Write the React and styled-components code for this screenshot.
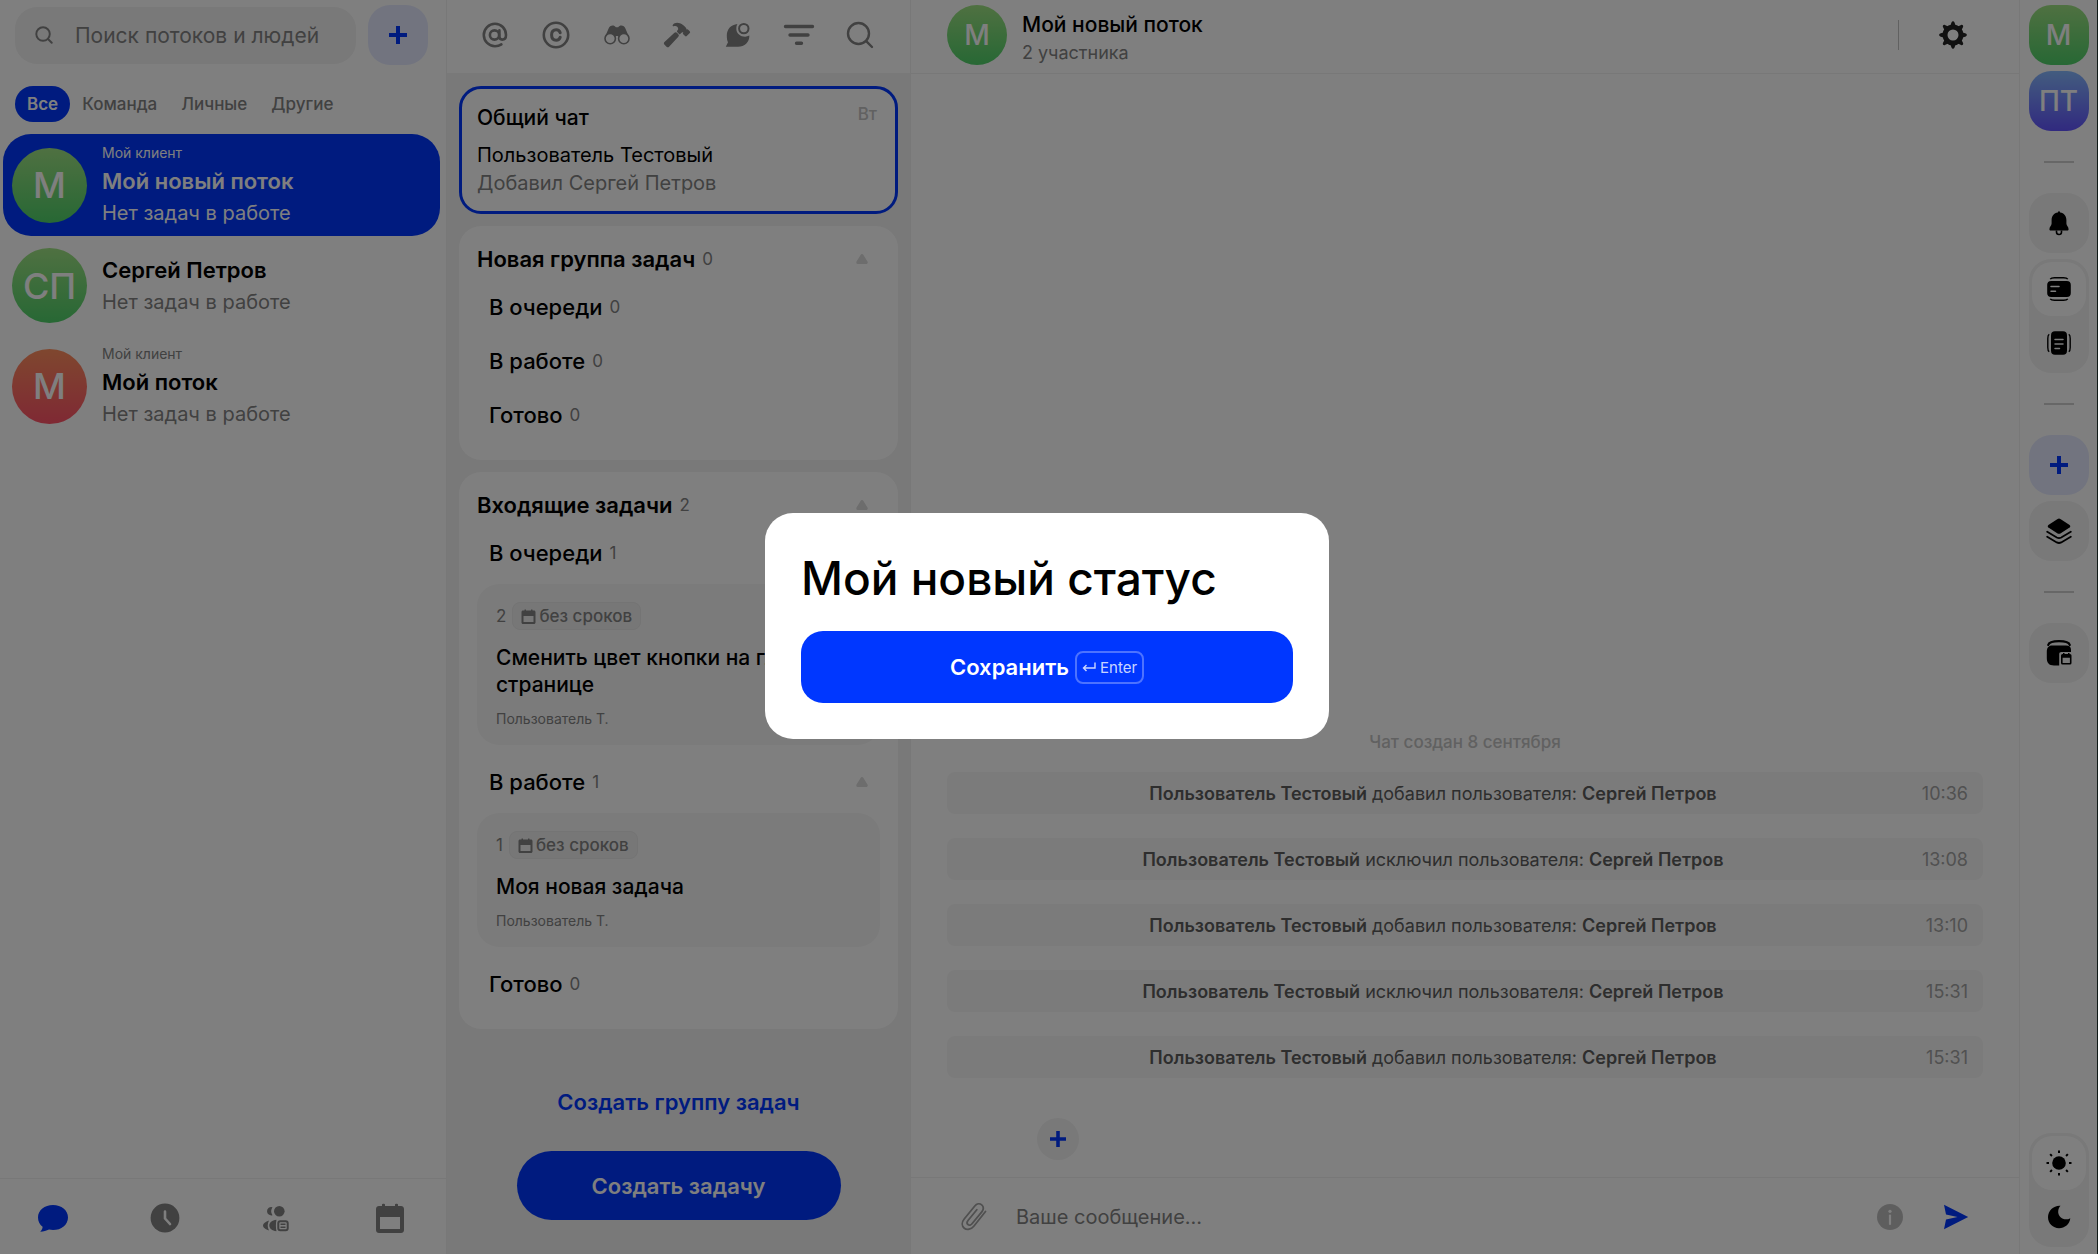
import styled, { createGlobalStyle, css } from 'styled-components';
import { IoHammer } from 'react-icons/io5';

const palette = {
    blue: '#0037ff',
    lightBlue: '#e4e9ff',
    black: '#000000',
    dark: '#5c5c5c',
    gray: '#828282',
    light: '#c2c2c2',
    line: '#f0f0f0',
    panel: '#f2f2f2',
    card: '#f7f7f7',
};

const gradients = {
    green: 'linear-gradient(#9fe283, #4fd069)',
    red: 'linear-gradient(#ff8f5e, #ff5268)',
    blue: 'linear-gradient(#86b9ff, #6254ff)',
};

const GlobalStyle = createGlobalStyle`
    * {
        box-sizing: border-box;
    }
    body {
        margin: 0;
        background: white;
        color: ${palette.black};
        font-family: Inter, 'Liberation Sans', sans-serif;
    }
    button, input {
        font-family: inherit;
    }
    button {
        padding: 0;
        border: none;
        background: none;
        cursor: pointer;
    }
    svg {
        display: block;
        flex-shrink: 0;
    }
    h1, h2, h3, p, ul {
        margin: 0;
        padding: 0;
    }
`;

/* icons */

const Svg = ({ size = 28, box = 28, children, ...rest }) => (
    <svg width={size} height={size} viewBox={`0 0 ${box} ${box}`} fill="none" aria-hidden="true" {...rest}>
        {children}
    </svg>
);

const SearchIcon = ({ size, width = 2 }) => (
    <Svg size={size}>
        <g stroke="currentColor" strokeWidth={width} strokeLinecap="round">
            <circle cx="12.5" cy="12.5" r="10.5" />
            <path d="M20.2 20.2L26 26" />
        </g>
    </Svg>
);

const PlusIcon = ({ size = 18 }) => (
    <Svg size={size} box={18}>
        <path d="M9 1.5V16.5M1.5 9H16.5" stroke="currentColor" strokeWidth="4" strokeLinecap="square" />
    </Svg>
);

const MentionIcon = () => (
    <Svg>
        <g stroke="currentColor" strokeWidth="2.6" strokeLinecap="round">
            <circle cx="13.5" cy="14" r="4.6" />
            <path d="M18.4 9.4V15.6C18.4 17.6 19.6 18.6 21.2 18.6C23.6 18.6 25 16.8 25 14C25 7.6 20.2 2.8 14 2.8S2.8 7.8 2.8 14S7.8 25.2 14 25.2C16.6 25.2 18.6 24.6 20.4 23.4" />
        </g>
    </Svg>
);

const CopyrightIcon = () => (
    <Svg>
        <circle cx="14" cy="14" r="12.2" stroke="currentColor" strokeWidth="2.6" />
        <path d="M18.2 16.2C17.6 18.2 16.2 19.2 14.2 19.2C11.4 19.2 9.6 17.2 9.6 14S11.4 8.8 14.2 8.8C16.2 8.8 17.6 9.8 18.2 11.8" stroke="currentColor" strokeWidth="3" strokeLinecap="round" />
    </Svg>
);

const BinocularsIcon = () => (
    <Svg>
        <path d="M2 16L5.6 7.4C6.6 4.4 11 3.4 12.8 6.2H15.2C17 3.4 21.4 4.4 22.4 7.4L26 16L18 18.5L15 15H13L10 18.5Z" fill="currentColor" />
        <circle cx="7.2" cy="17.6" r="5.2" fill="white" stroke="currentColor" strokeWidth="1.6" />
        <circle cx="20.8" cy="17.6" r="5.2" fill="white" stroke="currentColor" strokeWidth="1.6" />
    </Svg>
);

const MoodIcon = () => (
    <Svg>
        <path d="M13.5 3C7 3.6 2.8 8.2 2.8 14.5C2.8 17.4 3.2 19.8 4 21.2L1.8 25.8H14C20.6 25.8 25.4 21.6 25.4 14.6C19.5 17.6 12.5 13.6 12.4 8.4C12.3 6 12.6 4.4 13.5 3Z" fill="currentColor" />
        <circle cx="19.8" cy="7.6" r="4.7" stroke="currentColor" strokeWidth="2" />
    </Svg>
);

const FilterIcon = () => (
    <Svg size={32} box={32}>
        <path d="M2.5 7.5H29.5M7 16H25M13.5 24.2H18.5" stroke="currentColor" strokeWidth="3.4" strokeLinecap="round" />
    </Svg>
);

const ArrowIcon = () => (
    <Svg size={12} box={12}>
        <path d="M6 2.6L10.2 9.4H1.8Z" fill="currentColor" stroke="currentColor" strokeWidth="3" strokeLinejoin="round" />
    </Svg>
);

const CalendarIcon = ({ size = 30 }) => (
    <Svg size={size} box={30}>
        <path d="M4 3H7V1.5C7 0.5 10 0.5 10 1.5V3H20V1.5C20 0.5 23 0.5 23 1.5V3H26C27.7 3 29 4.3 29 6V27C29 28.7 27.7 30 26 30H4C2.3 30 1 28.7 1 27V6C1 4.3 2.3 3 4 3ZM5 14V26H25V14Z" fill="currentColor" fillRule="evenodd" />
    </Svg>
);

const ChatIcon = () => (
    <Svg size={32} box={32}>
        <path d="M16 3C24.4 3 31 8.2 31 15.4S24.4 28 16 28C14.6 28 13.2 27.8 12 27.5C9.500 28.7 6.500 29.8 3.2 29.8C4.8 28.3 5.6 26.6 5.6 24.8C2.7 22.5 1 19.2 1 15.4C1 8.2 7.6 3 16 3Z" fill="currentColor" />
    </Svg>
);

const ClockIcon = () => (
    <Svg size={30} box={30}>
        <circle cx="15" cy="15" r="14.4" fill="currentColor" />
        <path d="M15 8.5V15.5L20 21" stroke="white" strokeWidth="2.6" strokeLinecap="round" strokeLinejoin="round" />
    </Svg>
);

const PeopleIcon = () => (
    <Svg size={30} box={30}>
        <path d="M9.5 4.2A4.2 4.2 0 1 0 9.5 12.2A7 7 0 0 1 9.5 4.2Z" fill="currentColor" />
        <circle cx="16.3" cy="8.2" r="5.3" fill="currentColor" />
        <path d="M6 17.5C2.5 18.6 0 20.6 0 22.5S2.5 26.5 6 27.5C4.3 24.5 4.3 20.5 6 17.5ZM13.5 16.8C9 17.4 6.3 19.8 6.3 22.5S9 27.8 13.5 28.3C12.7 25 12.7 20 13.5 16.8Z" fill="currentColor" />
        <rect x="15.3" y="18.2" width="9.4" height="9" rx="2" stroke="currentColor" strokeWidth="2" />
        <path d="M17.5 21.3H22.5M17.5 24.2H22.5" stroke="currentColor" strokeWidth="1.6" />
    </Svg>
);

const GearIcon = () => (
    <Svg size={30} box={30}>
        <circle cx="15" cy="15" r="8" stroke="currentColor" strokeWidth="5" />
        {[0, 45, 90, 135, 180, 225, 270, 315].map((angle) => (
            <path key={angle} d="M12.2 6L13.6 2.2C14 0.8 16 0.8 16.4 2.2L17.8 6Z" fill="currentColor" transform={`rotate(${angle} 15 15)`} />
        ))}
    </Svg>
);

const BellIcon = () => (
    <Svg size={26} box={26}>
        <path d="M13 0.8L14.2 2.6C18 3.2 20.4 6 20.4 10V13.5C20.4 15.5 22.6 16.8 22.6 19.2C22.6 20.4 21.6 20.6 20.6 20.6H5.4C4.4 20.6 3.4 20.4 3.4 19.2C3.4 16.8 5.6 15.5 5.6 13.5V10C5.6 6 8 3.2 11.8 2.6Z" fill="currentColor" />
        <path d="M10.500 20.5V22A2.5 2.5 0 0 0 15.5 22V20.5" stroke="currentColor" strokeWidth="1.6" />
    </Svg>
);

const CardsIcon = ({ vertical }) => (
    <Svg size={26} box={26}>
        {vertical ? (
            <>
                <rect x="5" y="1.2" width="16" height="23.6" rx="4" fill="currentColor" />
                <path d="M3.2 4.200Q1.800 5.200 1.800 8.500V17.500Q1.800 20.800 3.200 21.800M22.800 4.200Q24.200 5.200 24.200 8.500V17.500Q24.200 20.800 22.800 21.800" stroke="currentColor" strokeWidth="1.4" />
                <path d="M9 9.5H17M9 14H17M9 18.5H13.5" stroke={palette.panel} strokeWidth="1.5" strokeLinecap="round" />
            </>
        ) : (
            <>
                <rect x="1.2" y="5" width="23.6" height="16" rx="4" fill="currentColor" />
                <path d="M4.200 3.200Q5.200 1.800 8.500 1.800H17.500Q20.800 1.800 21.800 3.200M4.200 22.800Q5.200 24.200 8.500 24.200H17.500Q20.800 24.200 21.800 22.800" stroke="currentColor" strokeWidth="1.4" />
                <path d="M5 10.5H13M5 15.2H9.5" stroke="white" strokeWidth="1.5" strokeLinecap="round" />
            </>
        )}
    </Svg>
);

const LayersIcon = () => (
    <Svg size={26} box={26}>
        <path d="M11.6 0.9Q13 0.2 14.4 0.9L23.6 7Q25.2 8.2 23.6 9.4L14.8 15.3Q13 16.4 11.2 15.3L2.4 9.4Q0.8 8.2 2.4 7Z" fill="currentColor" />
        <path d="M1.2 13.7L10.8 19.5Q13 20.7 15.2 19.5L24.8 13.7M1.2 18.7L10.8 24.4Q13 25.6 15.2 24.4L24.8 18.7" stroke="currentColor" strokeWidth="1.8" strokeLinecap="round" />
    </Svg>
);

const PlanIcon = () => (
    <Svg size={26} box={26}>
        <path d="M2.2 5C3 2 6 1.2 13 1.2S23 2 23.8 5" stroke="currentColor" strokeWidth="2.2" strokeLinecap="round" />
        <path d="M6 5.6H20C23.5 5.6 25 7 25 10V12H15.5C14 12 13.2 12.8 13.2 14.3V25.4H8C3 25.4 0.8 23 0.8 18V12C0.8 8 2.5 5.6 6 5.6Z" fill="currentColor" />
        <path d="M15 15.5Q15 14 16.5 14H17V13H18.5V14H22V13H23.5V14H24Q25.5 14 25.5 15.5V23Q25.5 24.5 24 24.5H16.5Q15 24.5 15 23ZM16.6 17.8V23H23.9V17.8Z" fill="currentColor" fillRule="evenodd" />
    </Svg>
);

const SunIcon = () => (
    <Svg size={26} box={26}>
        <circle cx="13" cy="13" r="6.8" fill="currentColor" />
        {[0, 45, 90, 135, 180, 225, 270, 315].map((angle) => (
            <path key={angle} d="M13 0.5V3" stroke="currentColor" strokeWidth="2" transform={`rotate(${angle} 13 13)`} />
        ))}
    </Svg>
);

const MoonIcon = () => (
    <Svg size={24} box={24}>
        <path d="M13.5 0.8C7 0.2 1 5.4 1 12.3C1 18.6 6 23.2 12 23.2C17.8 23.2 22.8 19 23.3 13.2C17.5 16.6 10.6 12 11.2 6C11.4 3.8 12.3 2.2 13.5 0.8Z" fill="currentColor" />
    </Svg>
);

const ClipIcon = () => (
    <Svg size={32} box={32}>
        <path d="M27.5 10.5L15.8 25.2C13.2 28.4 9 29.4 6.3 27.2C3.6 25 3.6 21.2 6.2 18L16.8 5C18.6 2.8 21.6 2.2 23.7 3.9C25.8 5.6 25.8 8.4 24 10.6L14 22.8C12.9 24.2 11.2 24.6 10 23.6C8.8 22.6 8.9 20.9 10 19.5L18.8 8.7" stroke="currentColor" strokeWidth="1.8" strokeLinecap="round" />
    </Svg>
);

const InfoIcon = () => (
    <Svg size={26} box={26}>
        <circle cx="13" cy="13" r="13" fill="currentColor" />
        <circle cx="13" cy="7.3" r="1.6" fill="white" />
        <path d="M13 11.5V20" stroke="white" strokeWidth="2.2" strokeLinecap="round" />
    </Svg>
);

const SendIcon = () => (
    <Svg size={26} box={26}>
        <path d="M1 0.8L25.2 13L1 25.2L3 15.4L14.5 13L3 10.6Z" fill="currentColor" />
    </Svg>
);

const EnterIcon = () => (
    <Svg size={14} box={14}>
        <path d="M13 2.5V8H1.5M4.5 5L1.5 8L4.5 11" stroke="currentColor" strokeWidth="1.4" />
    </Svg>
);

/* shared */

const Avatar = styled.span`
    display: flex;
    align-items: center;
    justify-content: center;
    flex-shrink: 0;
    width: ${({ $large }) => ($large ? '75px' : '60px')};
    height: ${({ $large }) => ($large ? '75px' : '60px')};
    border-radius: ${({ $square }) => ($square ? '22px' : '50%')};
    background: ${({ $color }) => gradients[$color]};
    color: white;
    font-size: ${({ $large }) => ($large ? '36px' : '28px')};
    font-weight: 500;
`;

const SquareButton = styled.button`
    display: flex;
    align-items: center;
    justify-content: center;
    flex-shrink: 0;
    width: 60px;
    height: 60px;
    border-radius: 22px;
    background: ${({ $primary }) => ($primary ? palette.lightBlue : palette.panel)};
    color: ${({ $primary }) => ($primary ? palette.blue : palette.black)};
`;

const IconButton = styled.button`
    display: flex;
    align-items: center;
    justify-content: center;
    width: 32px;
    height: 32px;
    color: ${({ $color }) => $color || palette.gray};
`;

const Page = styled.div`
    display: flex;
    height: 100vh;
    min-height: 760px;
    border-right: 1px solid #20342e;
`;

/* streams */

const Sidebar = styled.aside`
    display: flex;
    flex-direction: column;
    flex-shrink: 0;
    width: 446px;
`;

const SearchRow = styled.div`
    display: flex;
    align-items: center;
    gap: 12px;
    padding: 5px 18px 0 15px;
`;

const SearchBox = styled.label`
    display: flex;
    align-items: center;
    flex: 1;
    gap: 22px;
    min-width: 0;
    height: 57px;
    padding: 0 20px;
    border-radius: 22px;
    background: ${palette.panel};
    color: ${palette.gray};

    input {
        flex: 1;
        min-width: 0;
        padding: 0;
        border: none;
        outline: none;
        background: none;
        font-size: 21px;
    }
    input::placeholder {
        color: ${palette.gray};
        opacity: 1;
    }
`;

const Tabs = styled.nav`
    display: flex;
    padding: 21px 15px 12px;
`;

const Tab = styled.button`
    height: 36px;
    padding: 0 12px;
    border-radius: 18px;
    color: ${palette.gray};
    font-size: 17px;
    font-weight: 500;
    ${({ $active }) =>
        $active &&
        css`
            background: ${palette.blue};
            color: white;
            font-weight: 600;
        `}
`;

const StreamList = styled.ul`
    flex: 1;
    padding: 0 6px 0 3px;
    list-style: none;
`;

const Stream = styled.li`
    display: flex;
    align-items: center;
    gap: 15px;
    min-height: 99px;
    padding: 7px 9px;
    border-radius: 28px;
    background: ${({ $active }) => ($active ? palette.blue : 'transparent')};
    color: ${({ $active }) => ($active ? 'white' : palette.gray)};

    small {
        display: block;
        font-size: 14px;
        line-height: 24px;
    }
    h3 {
        color: ${({ $active }) => ($active ? 'white' : palette.black)};
        font-size: 22px;
        font-weight: 600;
        line-height: 32px;
    }
    p {
        font-size: 20px;
        line-height: 32px;
    }
`;

const BottomNav = styled.nav`
    display: flex;
    align-items: center;
    justify-content: space-between;
    height: 76px;
    padding: 2px 40px 0 37px;
    border-top: 1px solid ${palette.line};
`;

/* tasks */

const Board = styled.section`
    display: flex;
    flex-direction: column;
    flex-shrink: 0;
    width: 464px;
    border-left: 1px solid ${palette.line};
    background: ${palette.panel};
`;

const BoardTools = styled.header`
    display: flex;
    align-items: center;
    justify-content: space-between;
    height: 73px;
    flex-shrink: 0;
    padding: 0 34px 4px 32px;
    background: white;
`;

const BoardBody = styled.div`
    display: flex;
    flex-direction: column;
    flex: 1;
    gap: 12px;
    padding: 13px 12px 0;
`;

const GeneralChat = styled.article`
    padding: 15px 18px 14px 15px;
    border: 3px solid ${palette.blue};
    border-radius: 22px;
    background: white;

    h2 {
        margin-bottom: 9px;
        font-size: 21px;
        font-weight: 500;
        line-height: 28px;
    }
    p {
        font-size: 20px;
        line-height: 28px;
    }
    p + p {
        color: ${palette.gray};
    }
`;

const GeneralHead = styled.div`
    display: flex;
    justify-content: space-between;

    time {
        color: ${palette.light};
        font-size: 17px;
        font-weight: 500;
        line-height: 20px;
    }
`;

const Group = styled.article`
    padding: 18px;
    border-radius: 22px;
    background: white;
`;

const Count = styled.span`
    color: ${palette.gray};
    font-size: 17px;
    font-weight: 400;
`;

const GroupHead = styled.div`
    display: flex;
    align-items: center;
    gap: 7px;
    height: 30px;
    margin-bottom: 6px;
    padding-right: 12px;

    h2 {
        font-size: 22px;
        font-weight: 600;
    }
    button {
        margin-left: auto;
        color: #dadada;
    }
`;

const Status = styled(GroupHead)`
    height: 54px;
    margin-bottom: 0;
    padding-left: 12px;

    h2 {
        font-weight: 500;
    }
`;

const TaskCard = styled.div`
    margin: 4px 0 10px;
    padding: 18px 19px 16px;
    border-radius: 22px;
    background: ${palette.card};

    h3 {
        margin: 14px 0 11px;
        font-size: 21px;
        font-weight: 500;
        line-height: 27px;
    }
    p {
        color: ${palette.gray};
        font-size: 14px;
        line-height: 20px;
    }
`;

const TaskMeta = styled.div`
    display: flex;
    align-items: center;
    gap: 6px;
    height: 28px;
`;

const Deadline = styled.span`
    display: flex;
    align-items: center;
    gap: 3px;
    height: 28px;
    padding: 0 8px;
    border: 1px solid #e8e8e8;
    border-radius: 8px;
    background: #efefef;
    color: ${palette.gray};
    font-size: 17px;
    font-weight: 500;
`;

const BoardFooter = styled.footer`
    display: flex;
    flex-direction: column;
    align-items: center;
    gap: 33px;
    padding-bottom: 34px;
`;

const LinkButton = styled.button`
    color: ${palette.blue};
    font-size: 22px;
    font-weight: 600;
    line-height: 32px;
`;

const CreateButton = styled.button`
    width: 324px;
    height: 69px;
    border-radius: 35px;
    background: ${palette.blue};
    color: white;
    font-size: 22px;
    font-weight: 600;
`;

/* chat */

const Chat = styled.main`
    display: flex;
    flex-direction: column;
    flex: 1;
    min-width: 0;
    border-left: 1px solid ${palette.line};
`;

const ChatHeader = styled.header`
    display: flex;
    align-items: center;
    gap: 15px;
    height: 74px;
    padding: 0 50px 4px 36px;
    border-bottom: 1px solid ${palette.line};
`;

const ChatInfo = styled.div`
    padding-top: 8px;

    h1 {
        font-size: 21px;
        font-weight: 500;
        line-height: 28px;
    }
    p {
        color: ${palette.gray};
        font-size: 18px;
        line-height: 28px;
    }
`;

const ChatTools = styled.div`
    display: flex;
    align-items: center;
    height: 30px;
    margin-left: auto;
    padding-left: 38px;
    border-left: 1px solid ${palette.light};
`;

const Messages = styled.div`
    display: flex;
    flex-direction: column;
    justify-content: flex-end;
    flex: 1;
    padding: 0 36px 17px;
`;

const ChatDate = styled.p`
    margin-bottom: 18px;
    color: ${palette.light};
    font-size: 17px;
    font-weight: 500;
    line-height: 24px;
    text-align: center;
`;

const Message = styled.div`
    display: flex;
    align-items: center;
    gap: 16px;
    height: 42px;
    margin-bottom: 24px;
    padding: 0 15px;
    border-radius: 8px;
    background: ${palette.card};
    font-size: 18px;

    p {
        flex: 1;
        color: ${palette.dark};
        text-align: center;
    }
    b {
        font-weight: 600;
    }
    time {
        width: 48px;
        color: #a2a2a2;
        text-align: right;
    }
`;

const RoundButton = styled.button`
    display: flex;
    align-items: center;
    justify-content: center;
    width: 42px;
    height: 42px;
    margin: 16px 0 0 90px;
    border-radius: 50%;
    background: ${palette.panel};
    color: ${palette.blue};
`;

const Composer = styled.form`
    display: flex;
    align-items: center;
    height: 77px;
    padding: 2px 47px 0;
    border-top: 1px solid ${palette.line};

    input {
        flex: 1;
        min-width: 0;
        padding: 0 26px;
        border: none;
        outline: none;
        background: none;
        font-size: 20px;
    }
    input::placeholder {
        color: ${palette.gray};
        opacity: 1;
    }
`;

const ComposerActions = styled.div`
    display: flex;
    gap: 34px;
`;

/* right rail */

const Rail = styled.aside`
    display: flex;
    flex-direction: column;
    align-items: center;
    flex-shrink: 0;
    gap: 6px;
    width: 78px;
    padding: 5px 0 7px;
    border-left: 1px solid ${palette.line};
`;

const Divider = styled.hr`
    width: 30px;
    height: 2px;
    margin: 24px 0;
    border: none;
    background: #cfcfcf;
`;

const Switcher = styled.div`
    padding: 3px;
    border-radius: 22px;
    background: ${palette.panel};
    ${({ $bottom }) =>
        $bottom &&
        css`
            margin-top: auto;
        `}
`;

const SwitchButton = styled.button`
    display: flex;
    align-items: center;
    justify-content: center;
    width: 54px;
    height: 54px;
    border-radius: 20px;
    background: ${({ $active }) => ($active ? 'white' : 'transparent')};
    color: ${palette.black};
`;

/* modal */

const Overlay = styled.div`
    position: fixed;
    inset: 0;
    display: flex;
    align-items: center;
    justify-content: center;
    padding: 0 4px 2px 0;
    background: rgba(0, 0, 0, 0.5);
`;

const Modal = styled.form`
    display: flex;
    flex-direction: column;
    gap: 24px;
    width: 564px;
    max-width: 100%;
    padding: 36px;
    border-radius: 28px;
    background: white;
`;

const StatusInput = styled.input`
    width: 100%;
    height: 58px;
    padding: 0;
    border: none;
    outline: none;
    background: none;
    color: ${palette.black};
    font-size: 46px;
    font-weight: 500;
`;

const SaveButton = styled.button`
    display: flex;
    align-items: center;
    justify-content: center;
    gap: 6px;
    height: 72px;
    border-radius: 22px;
    background: ${palette.blue};
    color: white;
    font-size: 22px;
    font-weight: 600;

    kbd {
        display: flex;
        align-items: center;
        gap: 4px;
        height: 33px;
        padding: 0 5px;
        border: 2px solid rgba(255, 255, 255, 0.3);
        border-radius: 8px;
        color: rgba(255, 255, 255, 0.8);
        font-family: inherit;
        font-size: 15px;
        font-weight: 400;
    }
`;

const tabs = ['Все', 'Команда', 'Личные', 'Другие'];

const streams = [
    { letters: 'М', color: 'green', client: 'Мой клиент', name: 'Мой новый поток' },
    { letters: 'СП', color: 'green', name: 'Сергей Петров' },
    { letters: 'М', color: 'red', client: 'Мой клиент', name: 'Мой поток' },
];

const tools = [
    { label: 'Упоминания', icon: <MentionIcon /> },
    { label: 'Авторство', icon: <CopyrightIcon /> },
    { label: 'Наблюдение', icon: <BinocularsIcon /> },
    { label: 'В работе', icon: <IoHammer size={28} /> },
    { label: 'Непрочитанные', icon: <MoodIcon /> },
    { label: 'Фильтр', icon: <FilterIcon /> },
    { label: 'Поиск', icon: <SearchIcon size={28} width={2.4} /> },
];

const groups = [
    {
        title: 'Новая группа задач',
        count: 0,
        statuses: [
            { title: 'В очереди', tasks: [] },
            { title: 'В работе', tasks: [] },
            { title: 'Готово', tasks: [] },
        ],
    },
    {
        title: 'Входящие задачи',
        count: 2,
        statuses: [
            { title: 'В очереди', tasks: [{ id: 2, title: 'Сменить цвет кнопки на главной странице' }] },
            { title: 'В работе', tasks: [{ id: 1, title: 'Моя новая задача' }] },
            { title: 'Готово', tasks: [] },
        ],
    },
];

const messages = [
    { action: 'добавил', time: '10:36' },
    { action: 'исключил', time: '13:08' },
    { action: 'добавил', time: '13:10' },
    { action: 'исключил', time: '15:31' },
    { action: 'добавил', time: '15:31' },
];

const Streams = () => (
    <Sidebar>
        <SearchRow>
            <SearchBox>
                <SearchIcon size={18} width={3} />
                <input type="text" placeholder="Поиск потоков и людей" aria-label="Поиск потоков и людей" />
            </SearchBox>
            <SquareButton $primary aria-label="Создать поток">
                <PlusIcon />
            </SquareButton>
        </SearchRow>
        <Tabs>
            {tabs.map((tab, i) => (
                <Tab key={tab} $active={i === 0}>
                    {tab}
                </Tab>
            ))}
        </Tabs>
        <StreamList>
            {streams.map((stream, i) => (
                <Stream key={stream.name} $active={i === 0}>
                    <Avatar $large $color={stream.color}>
                        {stream.letters}
                    </Avatar>
                    <div>
                        {stream.client ? <small>{stream.client}</small> : null}
                        <h3>{stream.name}</h3>
                        <p>Нет задач в работе</p>
                    </div>
                </Stream>
            ))}
        </StreamList>
        <BottomNav>
            <IconButton $color={palette.blue} aria-label="Чаты">
                <ChatIcon />
            </IconButton>
            <IconButton aria-label="Время">
                <ClockIcon />
            </IconButton>
            <IconButton aria-label="Команда">
                <PeopleIcon />
            </IconButton>
            <IconButton aria-label="Календарь">
                <CalendarIcon />
            </IconButton>
        </BottomNav>
    </Sidebar>
);

const Task = ({ id, title }) => (
    <TaskCard>
        <TaskMeta>
            <Count>{id}</Count>
            <Deadline>
                <CalendarIcon size={15} />
                без сроков
            </Deadline>
        </TaskMeta>
        <h3>{title}</h3>
        <p>Пользователь Т.</p>
    </TaskCard>
);

const Tasks = () => (
    <Board>
        <BoardTools>
            {tools.map((tool) => (
                <IconButton key={tool.label} aria-label={tool.label}>
                    {tool.icon}
                </IconButton>
            ))}
        </BoardTools>
        <BoardBody>
            <GeneralChat>
                <GeneralHead>
                    <h2>Общий чат</h2>
                    <time>Вт</time>
                </GeneralHead>
                <p>Пользователь Тестовый</p>
                <p>Добавил Сергей Петров</p>
            </GeneralChat>
            {groups.map((group) => (
                <Group key={group.title}>
                    <GroupHead>
                        <h2>{group.title}</h2>
                        <Count>{group.count}</Count>
                        <button aria-label="Свернуть">
                            <ArrowIcon />
                        </button>
                    </GroupHead>
                    {group.statuses.map(({ title, tasks }) => (
                        <div key={title}>
                            <Status>
                                <h2>{title}</h2>
                                <Count>{tasks.length}</Count>
                                {tasks.length ? (
                                    <button aria-label="Свернуть">
                                        <ArrowIcon />
                                    </button>
                                ) : null}
                            </Status>
                            {tasks.map((task) => (
                                <Task key={task.id} {...task} />
                            ))}
                        </div>
                    ))}
                </Group>
            ))}
        </BoardBody>
        <BoardFooter>
            <LinkButton>Создать группу задач</LinkButton>
            <CreateButton>Создать задачу</CreateButton>
        </BoardFooter>
    </Board>
);

const ChatPanel = () => (
    <Chat>
        <ChatHeader>
            <Avatar $color="green">М</Avatar>
            <ChatInfo>
                <h1>Мой новый поток</h1>
                <p>2 участника</p>
            </ChatInfo>
            <ChatTools>
                <IconButton $color="#222222" aria-label="Настройки">
                    <GearIcon />
                </IconButton>
            </ChatTools>
        </ChatHeader>
        <Messages>
            <ChatDate>Чат создан 8 сентября</ChatDate>
            {messages.map(({ action, time }, i) => (
                <Message key={i}>
                    <p>
                        <b>Пользователь Тестовый</b> {action} пользователя: <b>Сергей Петров</b>
                    </p>
                    <time>{time}</time>
                </Message>
            ))}
            <RoundButton aria-label="Добавить">
                <PlusIcon size={16} />
            </RoundButton>
        </Messages>
        <Composer>
            <IconButton type="button" $color="#a0a0a0" aria-label="Прикрепить файл">
                <ClipIcon />
            </IconButton>
            <input type="text" placeholder="Ваше сообщение..." aria-label="Ваше сообщение" />
            <ComposerActions>
                <IconButton type="button" $color="#bdbdbd" aria-label="Информация">
                    <InfoIcon />
                </IconButton>
                <IconButton type="button" $color={palette.blue} aria-label="Отправить">
                    <SendIcon />
                </IconButton>
            </ComposerActions>
        </Composer>
    </Chat>
);

const RightRail = () => (
    <Rail>
        <Avatar $square $color="green">
            М
        </Avatar>
        <Avatar $square $color="blue">
            ПТ
        </Avatar>
        <Divider />
        <SquareButton aria-label="Уведомления">
            <BellIcon />
        </SquareButton>
        <Switcher>
            <SwitchButton $active aria-label="Горизонтальный вид">
                <CardsIcon />
            </SwitchButton>
            <SwitchButton aria-label="Вертикальный вид">
                <CardsIcon vertical />
            </SwitchButton>
        </Switcher>
        <Divider />
        <SquareButton $primary aria-label="Добавить">
            <PlusIcon />
        </SquareButton>
        <SquareButton aria-label="Слои">
            <LayersIcon />
        </SquareButton>
        <Divider />
        <SquareButton aria-label="План">
            <PlanIcon />
        </SquareButton>
        <Switcher $bottom>
            <SwitchButton $active aria-label="Светлая тема">
                <SunIcon />
            </SwitchButton>
            <SwitchButton aria-label="Тёмная тема">
                <MoonIcon />
            </SwitchButton>
        </Switcher>
    </Rail>
);

const App = () => {
    return (
        <>
            <GlobalStyle />
            <Page>
                <Streams />
                <Tasks />
                <ChatPanel />
                <RightRail />
            </Page>
            <Overlay>
                <Modal role="dialog" aria-modal="true" onSubmit={(e) => e.preventDefault()}>
                    <StatusInput type="text" defaultValue="Мой новый статус" aria-label="Название статуса" />
                    <SaveButton type="submit">
                        Сохранить
                        <kbd>
                            <EnterIcon />
                            Enter
                        </kbd>
                    </SaveButton>
                </Modal>
            </Overlay>
        </>
    );
};

export default App;
